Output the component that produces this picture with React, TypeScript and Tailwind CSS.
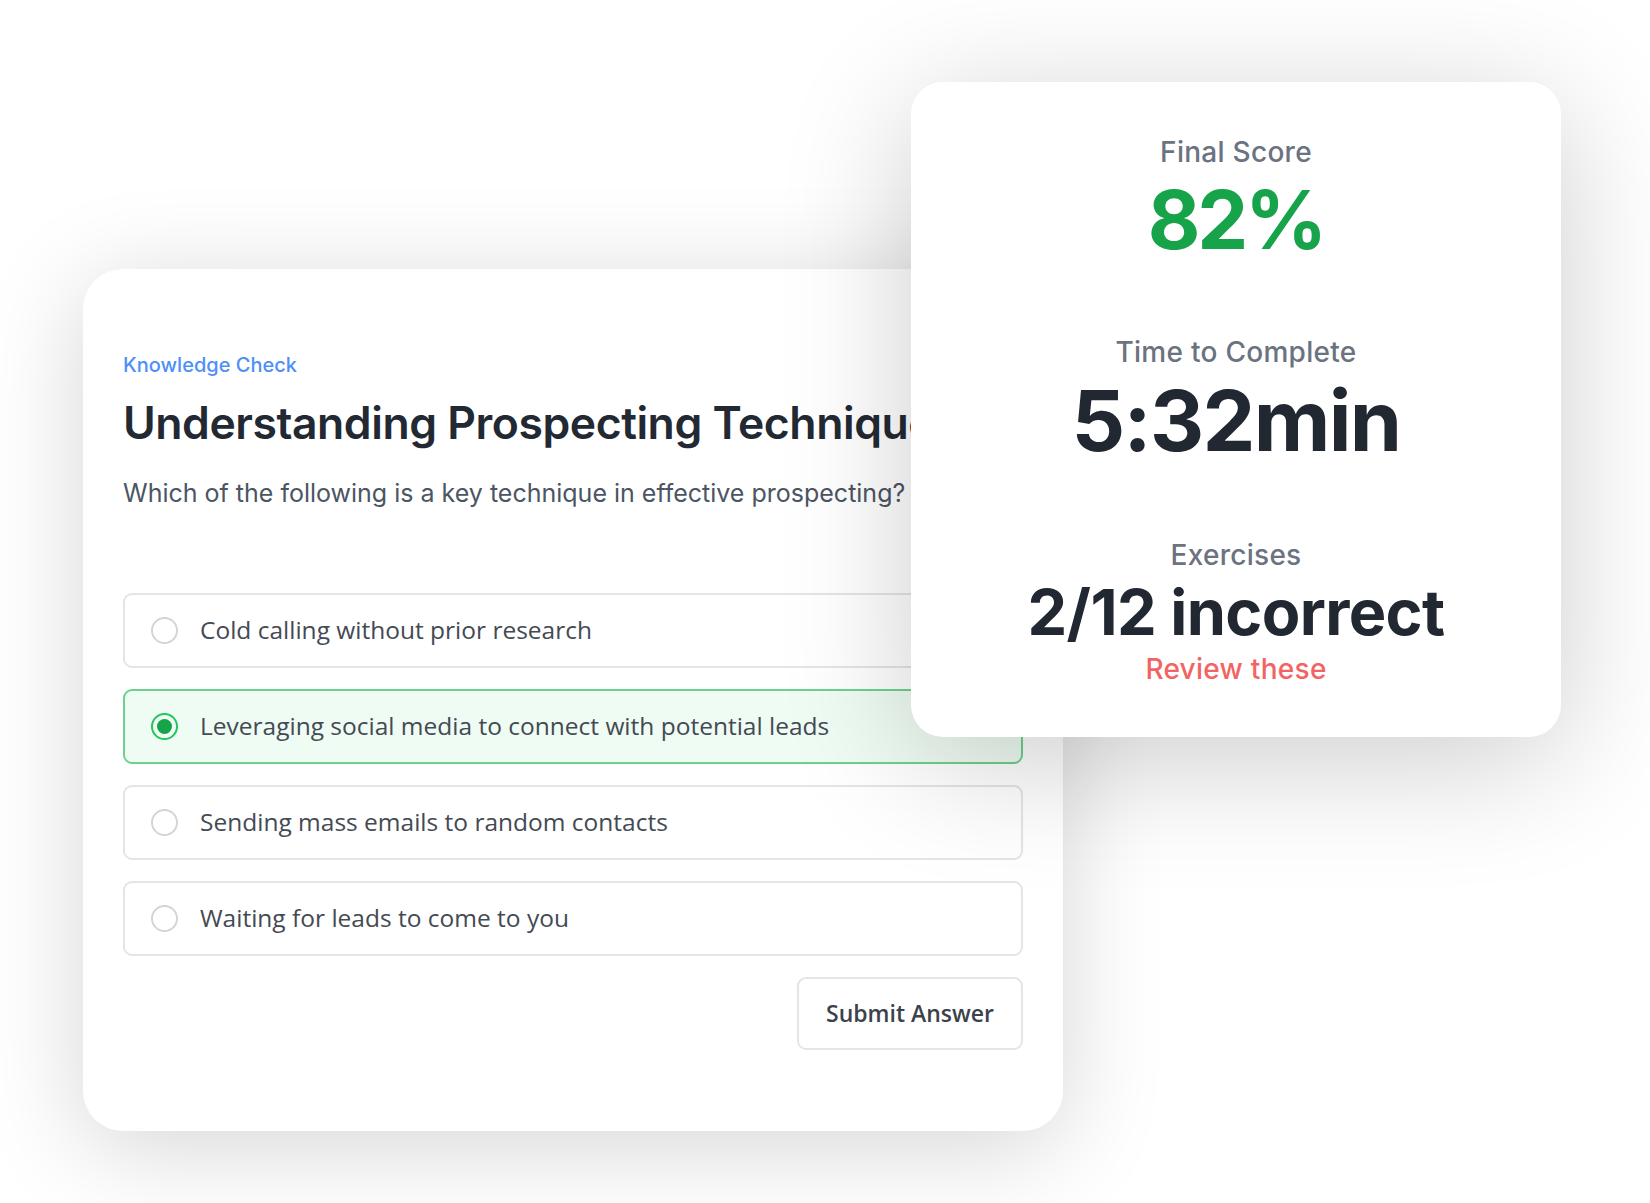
import React, { useState } from 'react';

const inter = { fontFamily: 'Inter, "Liberation Sans", sans-serif' };
const body = { fontFamily: '"Open Sans", "Liberation Sans", sans-serif' };

const options = [
  'Cold calling without prior research',
  'Leveraging social media to connect with potential leads',
  'Sending mass emails to random contacts',
  'Waiting for leads to come to you',
];

function Radio({ checked }: { checked: boolean }) {
  return checked ? (
    <span className="flex h-[27px] w-[27px] shrink-0 items-center justify-center rounded-full border-[2.5px] border-[#22c55e]">
      <span className="h-[15px] w-[15px] rounded-full bg-[#16a34a]" />
    </span>
  ) : (
    <span className="h-[27px] w-[27px] shrink-0 rounded-full border-2 border-[#d1d5db]" />
  );
}

function QuizCard() {
  const [selected, setSelected] = useState(1);

  return (
    <div className="ml-[83px] flex h-[862px] w-[980px] flex-col rounded-[40px] bg-white px-[40px] pt-[82px] shadow-[0_16px_100px_rgba(0,0,0,0.17)]">
      <p style={inter} className="text-[20px] leading-[28px] font-medium text-[#4f8ff7]">
        Knowledge Check
      </p>
      <h1
        style={inter}
        className="mt-[18px] whitespace-nowrap text-[44.5px] leading-[53px] font-semibold tracking-[-0.01em] text-[#232932]"
      >
        Understanding Prospecting Techniques
      </h1>
      <p style={inter} className="mt-[27px] whitespace-nowrap text-[25px] leading-[32px] text-[#4b5563]">
        Which of the following is a key technique in effective prospecting?
      </p>

      <div className="mt-[84px] flex flex-col gap-[21px]">
        {options.map((label, i) => {
          const active = i === selected;
          return (
            <button
              key={label}
              onClick={() => setSelected(i)}
              className={
                active
                  ? 'flex h-[75px] items-center gap-[22px] rounded-[9px] border-2 border-[#6dd18e] bg-[#effcf3] px-[26px] text-left'
                  : 'flex h-[75px] items-center gap-[22px] rounded-[9px] border-2 border-[#e3e5e8] bg-white px-[26px] text-left'
              }
            >
              <Radio checked={active} />
              <span style={body} className="text-[24.5px] font-medium text-[#444a53]">
                {label}
              </span>
            </button>
          );
        })}
      </div>

      <div className="mt-[21px] flex justify-end">
        <button
          style={body}
          className="h-[73px] w-[226px] rounded-[9px] border-2 border-[#e3e5e8] bg-white text-[23px] font-semibold text-[#3c424b]"
        >
          Submit Answer
        </button>
      </div>
    </div>
  );
}

function ResultsCard() {
  return (
    <div
      style={inter}
      className="absolute left-[911px] top-[82px] flex h-[655px] w-[650px] flex-col items-center rounded-[32px] bg-white pt-[53px] text-center shadow-[0_24px_130px_rgba(0,0,0,0.2)]"
    >
      <p className="text-[28px] leading-[34px] font-medium tracking-[0.01em] text-[#6b7280]">Final Score</p>
      <p className="mt-[9px] text-[81px] leading-[84px] font-bold tracking-[-0.04em] text-[#16a34a]">82%</p>

      <p className="mt-[73px] text-[28px] leading-[34px] font-medium tracking-[0.01em] text-[#6b7280]">
        Time to Complete
      </p>
      <p className="mt-[10px] text-[84px] leading-[84px] font-bold tracking-[-0.02em] text-[#222831]">5:32min</p>

      <p className="mt-[75px] text-[28px] leading-[34px] font-medium tracking-[0.01em] text-[#6b7280]">Exercises</p>
      <p className="mt-[9px] text-[63px] leading-[62px] font-bold tracking-[-0.01em] text-[#222831]">
        2/12 incorrect
      </p>
      <button className="mt-[9px] text-[28px] leading-[34px] font-medium tracking-[0.01em] text-[#f26464]">
        Review these
      </button>
    </div>
  );
}

export default function App() {
  return (
    <div className="relative h-[1203px] w-[1650px] overflow-hidden bg-white pt-[269px]">
      <QuizCard />
      <ResultsCard />
    </div>
  );
}
